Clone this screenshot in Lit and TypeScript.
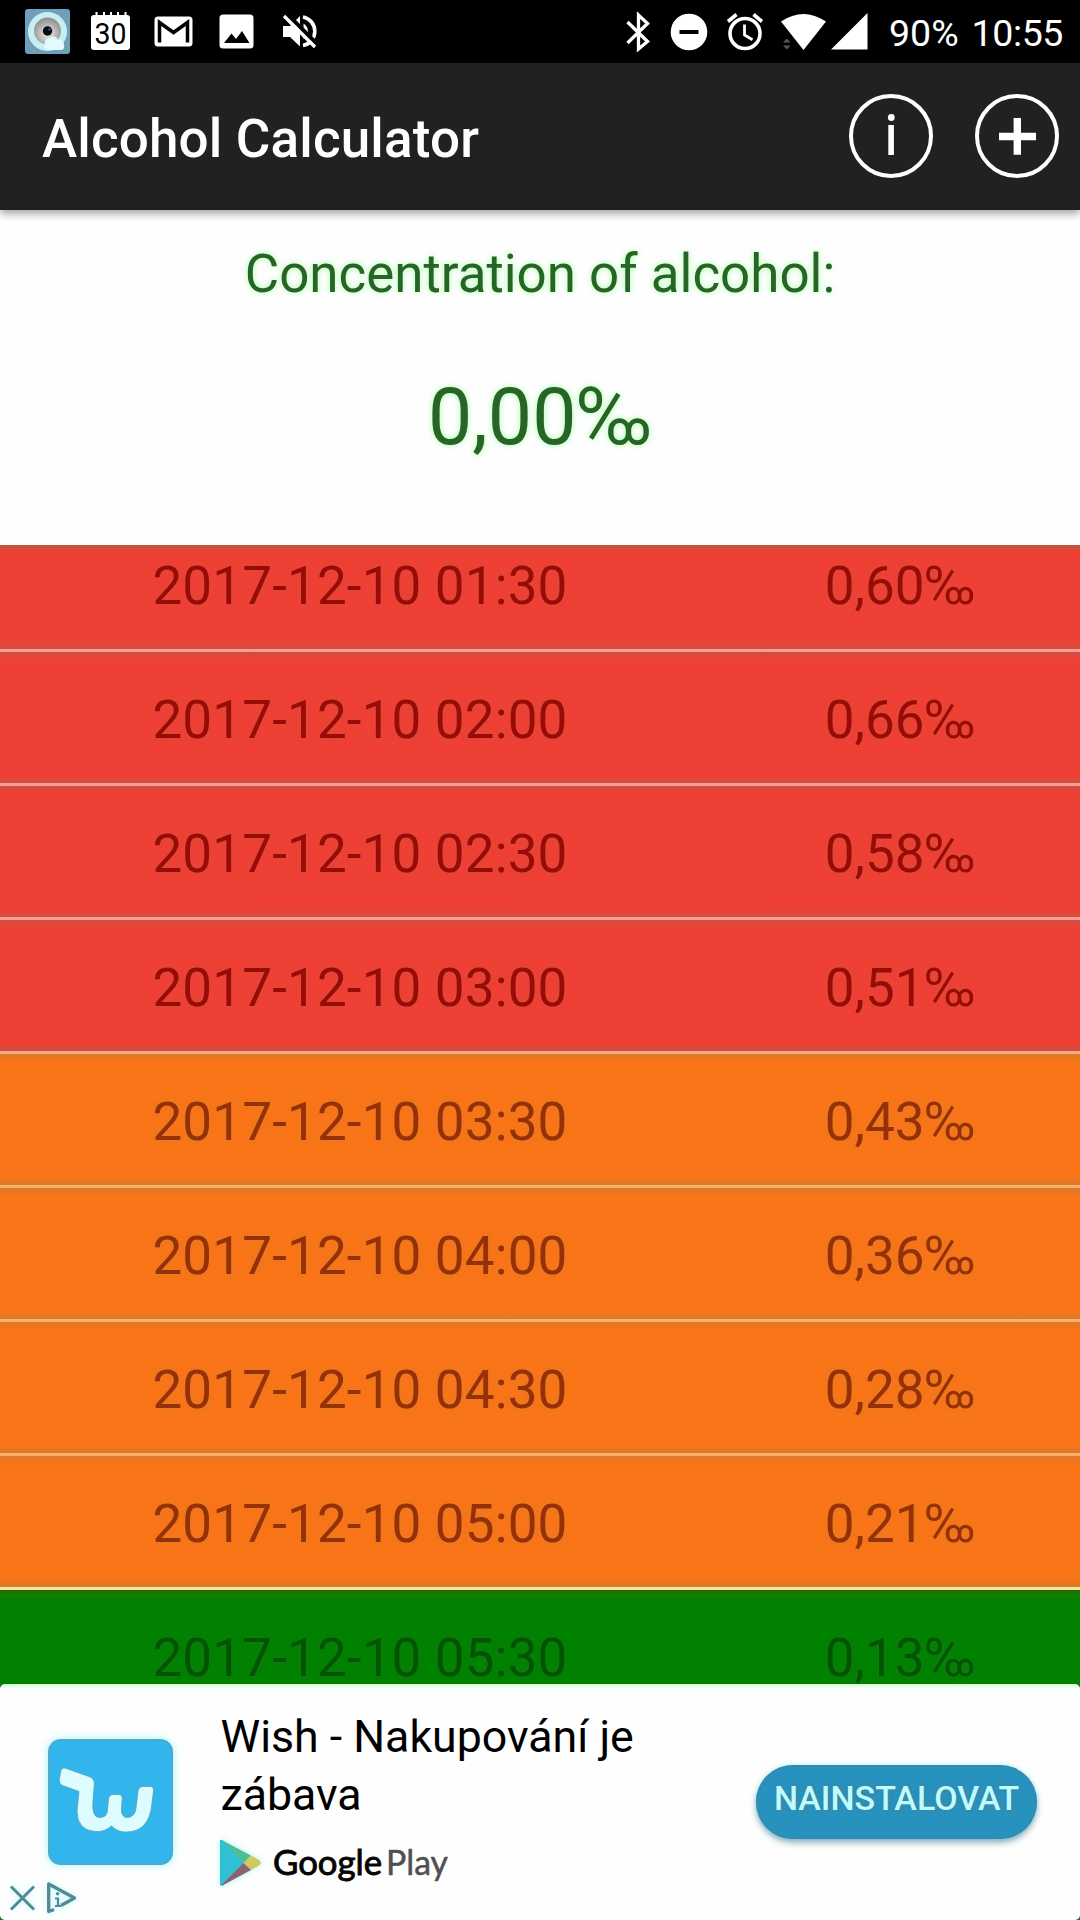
import { LitElement, html, css, svg } from "lit";
import { customElement, property } from "lit/decorators.js";
import { classMap } from "lit/directives/class-map.js";

type Level = "high" | "mid" | "low";
interface Entry { time: string; value: string; level: Level; }

const ENTRIES: Entry[] = [
  { time: "2017-12-10 01:30", value: "0,60‰", level: "high" },
  { time: "2017-12-10 02:00", value: "0,66‰", level: "high" },
  { time: "2017-12-10 02:30", value: "0,58‰", level: "high" },
  { time: "2017-12-10 03:00", value: "0,51‰", level: "high" },
  { time: "2017-12-10 03:30", value: "0,43‰", level: "mid" },
  { time: "2017-12-10 04:00", value: "0,36‰", level: "mid" },
  { time: "2017-12-10 04:30", value: "0,28‰", level: "mid" },
  { time: "2017-12-10 05:00", value: "0,21‰", level: "mid" },
  { time: "2017-12-10 05:30", value: "0,13‰", level: "low" },
];

const icon = (x: number, w: number, body: unknown) => html`
  <svg width=${w} height="63" viewBox="${x} 0 ${w} 63">${body}</svg>`;

@customElement("status-bar")
class StatusBar extends LitElement {
  static styles = css`
    :host { display: flex; height: 63px; background: #000; color: #fff; overflow: hidden;
      font-family: Roboto, sans-serif; }
    svg { display: block; flex: none; }
    .notes { display: flex; gap: 18px; padding-left: 25px; flex: 1; }
    .system { display: flex; }
    .text { box-sizing: border-box; width: 209px; display: flex; justify-content: space-between;
      padding: 2px 17px 0 18px; font-size: 37.500px; line-height: 63px; white-space: nowrap; }
    .clock { letter-spacing: -0.400px; }
    .digits { font: 400 30px Roboto, sans-serif; }
  `;
  render() {
    return html`
      <div class="notes">
        ${icon(25, 45, svg`
          <defs>
            <radialGradient id="lens" cx="0.5" cy="0.6" r="0.6">
              <stop offset="0" stop-color="#eeeeec"/><stop offset="1" stop-color="#8b8b89"/>
            </radialGradient>
          </defs>
          <rect x="25" y="9" width="45" height="45" rx="3" fill="#6f9fb9"/>
          <circle cx="47.500" cy="31.500" r="19.500" fill="#c8eef5"/>
          <circle cx="47.500" cy="31" r="13.500" fill="url(#lens)"/>
          <circle cx="47.500" cy="31" r="4.700" fill="#080c12"/>
          <circle cx="49.500" cy="29.500" r="1" fill="#6d7c88"/>
          <path d="M45 43a4 4 0 0 1 4-5 5.500 5.500 0 0 1 9 2 5 5 0 0 1 6 4q1 6-3 6H50q-8-1-5-7z" fill="#e2f9fd"/>`)}
        ${icon(88, 45, svg`
          <rect x="91" y="15" width="39" height="35" rx="3" fill="#fff"/>
          <path d="M96.500 12v5M104 12v5M111 12v5M118 12v5M125.500 12v5" stroke="#fff" stroke-width="2"/>
          <text class="digits" x="110.500" y="43.500" text-anchor="middle" textLength="32" lengthAdjust="spacingAndGlyphs" fill="#000">30</text>`)}
        ${icon(151, 45, svg`
          <rect x="154.500" y="16.500" width="38" height="30" rx="3.500" fill="#fff"/>
          <path d="M159.500 42.500V22.500L173.500 32.500L187.500 22.500V42.500" fill="none" stroke="#000" stroke-width="3.500"/>`)}
        ${icon(214, 45, svg`
          <rect x="219.500" y="14.500" width="34" height="34" rx="3.500" fill="#fff"/>
          <path d="M224 43L231.500 33.500L236 39L242 31L249.500 43Z" fill="#000"/>`)}
        ${icon(277, 45, svg`
          <path d="M283 26h7l10-10v30.500l-10-9.500h-7z" fill="#fff"/>
          <path d="M303.500 23.500a9 9 0 0 1 0 15.500z" fill="#fff"/>
          <path d="M303 17a14.500 14.500 0 0 1 0 28.500" fill="none" stroke="#fff" stroke-width="3.600"/>
          <path d="M286.500 13.500L318 45" stroke="#000" stroke-width="4"/>
          <path d="M284 16L315 47" stroke="#fff" stroke-width="3.400"/>`)}
      </div>
      <div class="system">
        ${icon(615, 48, svg`
          <path d="M627.500 22L647.500 41.500L638.500 49V15L647.500 23.500L627.500 43" fill="none" stroke="#fff" stroke-width="3.300"/>`)}
        ${icon(663, 53, svg`
          <circle cx="689" cy="32" r="18.300" fill="#fff"/>
          <rect x="679.500" y="30" width="19" height="4" fill="#000"/>`)}
        ${icon(716, 58, svg`
          <circle cx="745" cy="33.500" r="15" fill="none" stroke="#fff" stroke-width="3.600"/>
          <path d="M744.500 24.500v10.500l8 4.700" fill="none" stroke="#fff" stroke-width="2.800"/>
          <path d="M728 21.500l8.500-7M762 21.500l-8.500-7" stroke="#fff" stroke-width="3.600"/>`)}
        ${icon(774, 55, svg`
          <path d="M781 21.500Q803.500 6.500 826 21.500L803.500 50Z" fill="#fff"/>
          <path d="M783 42.500l3.800-4 3.800 4zM783 45.500l3.800 4 3.800-4z" fill="#555"/>`)}
        ${icon(829, 42, svg`<path d="M831 49.500L867.500 13V49.500Z" fill="#fff"/>`)}
        <div class="text"><span>90%</span><span class="clock">10:55</span></div>
      </div>`;
  }
}

@customElement("title-bar")
class TitleBar extends LitElement {
  static styles = css`
    :host { display: flex; align-items: center; justify-content: space-between; height: 147px;
      box-sizing: border-box; padding: 0 21px 1px 42px; background: #212121; color: #fff;
      box-shadow: 0 3px 9px rgba(0, 0, 0, 0.4); z-index: 1; font-family: Roboto, sans-serif; }
    .title { padding-top: 5px; font-size: 53px; font-weight: 500; line-height: 62px; letter-spacing: 0.150px; white-space: nowrap; }
    .actions { display: flex; gap: 42px; }
    svg { display: block; }
  `;
  render() {
    return html`
      <div class="title">Alcohol Calculator</div>
      <div class="actions">
        <svg width="84" height="84" viewBox="0 0 84 84">
          <circle cx="42" cy="42" r="40" fill="none" stroke="#fff" stroke-width="4"/>
          <circle cx="42.300" cy="23.500" r="3.400" fill="#fff"/>
          <rect x="39.300" y="31" width="5.600" height="30" fill="#fff"/>
        </svg>
        <svg width="84" height="84" viewBox="0 0 84 84">
          <circle cx="42" cy="42" r="40" fill="none" stroke="#fff" stroke-width="4"/>
          <path d="M24 42.500H61M42.300 24V60.700" stroke="#fff" stroke-width="7.400"/>
        </svg>
      </div>`;
  }
}

@customElement("history-list")
class HistoryList extends LitElement {
  @property({ attribute: false }) entries: Entry[] = [];
  static styles = css`
    :host { display: flex; flex-direction: column; overflow: hidden; font-family: Roboto, sans-serif; }
    .row { flex: none; display: grid; grid-template-columns: 2fr 1fr; align-items: center; justify-items: center;
      box-sizing: border-box; height: 134px; padding-top: 5px; font-size: 53px; line-height: 61px;
      white-space: nowrap; border-bottom: 3px solid; }
    .row:first-child { margin-top: -27px; }
    .time { letter-spacing: 0.150px; }
    .high { color: #980b07; border-color: #ff9c91; text-shadow: 0 0 5px rgba(200, 85, 60, 0.7);
      background: linear-gradient(#c95046, #e34637 4px, #ef4035 9px, #ef4035 calc(100% - 9px), #e34637 calc(100% - 4px), #c95046); }
    .row:first-child { background: linear-gradient(#ef4035 27px, #b85a45 27px, #dd4838 31px, #ef4035 36px, #ef4035 calc(100% - 9px), #e34637 calc(100% - 4px), #c95046); }
    .mid { color: #963007; border-color: #ffae68; text-shadow: 0 0 5px rgba(215, 125, 45, 0.7);
      background: linear-gradient(#d77c32, #ee751e 4px, #f97518 9px, #f97518 calc(100% - 9px), #ee7520 calc(100% - 4px), #d2802f); }
    .high.edge { border-color: #ffaa85; }
    .mid.edge { border-color: #f0e79d; }
    .low { color: #005600; border-color: #9dff9d; text-shadow: 0 0 5px rgba(30, 115, 25, 0.8);
      background: linear-gradient(#32600c, #108000 5px, #008200 9px); }
  `;
  render() {
    return this.entries.map((e, i) => {
      const next = this.entries[i + 1];
      return html`<div class=${classMap({ row: true, [e.level]: true, edge: !!next && next.level !== e.level })}>
        <span class="time">${e.time}</span><span>${e.value}</span>
      </div>`;
    });
  }
}

@customElement("ad-banner")
class AdBanner extends LitElement {
  static styles = css`
    :host { display: block; height: 236px; background: #146f1a; font-family: Roboto, sans-serif; position: relative; }
    .card { box-sizing: border-box; height: 236px; display: flex; align-items: flex-start; padding: 0 43px 0 48px;
      background: linear-gradient(#d5ffd5, #fefefe 5px); border-radius: 5px; }
    svg { display: block; flex: none; overflow: visible; }
    .logo { margin-top: 55px; filter: drop-shadow(0 0 4px #9cf6ff); }
    .copy { margin-left: 47.500px; padding-top: 24px; flex: 1; }
    .name { width: 440px; font-size: 44.700px; line-height: 58px; color: #000; }
    .store { display: flex; align-items: flex-start; margin-top: 16px; margin-left: -0.500px; }
    .tri { filter: drop-shadow(0 0 3px #a5f7f4); }
    .brand { font-family: Lato, sans-serif; font-size: 35px; }
    .cta { box-sizing: border-box; margin-top: 81px; width: 281px; height: 74px; border-radius: 37px; padding-bottom: 8px;
      display: flex; align-items: center; justify-content: center; background: #2892bf; color: #bdfbff;
      font-size: 34px; font-weight: 500; box-shadow: 0 4px 6px rgba(30, 90, 130, 0.45), 0 0 5px #b5f8ff, inset 0 0 3px #487c8c;
      text-shadow: 0 0 4px #487e8e; }
    .marks { position: absolute; left: 8px; bottom: 5px; filter: drop-shadow(0 0 3px #b5f8ff); }
  `;
  render() {
    return html`
      <div class="card">
        <svg class="logo" width="125" height="126" viewBox="0 0 125 126">
          <rect x="0.800" y="0.800" width="123.500" height="124.500" rx="12" fill="#32b5ed" stroke="#59a6bd" stroke-width="1.500"/>
          <path d="M17 29L41 37.500Q47 39.500 46.300 46L45 62Q43.500 79 52 78.500Q59 78.500 59.500 71L60.500 60Q61 55.500 65.500 55.500H70.500Q74.500 55.500 74.200 60L73.500 70Q73 78.500 79.500 78.500Q87 78 88 69L90 52Q91 47.500 95 47.500H102Q105.800 47.500 105.500 52L104 64Q101.500 92.500 79 93Q70 93.500 63.500 87Q56 93.500 47 92.500Q29 91 29 72L31 52.500L14.500 46.500Q11 45 11.300 41L12.500 33Q13.500 28.500 17 29Z" fill="#dcfcff" stroke="#579fb2" stroke-width="0.800"/>
        </svg>
        <div class="copy">
          <div class="name">Wish - Nakupování je zábava</div>
          <div class="store">
            <svg class="tri" width="41" height="46" viewBox="0 0 41 46">
              <path d="M0 0H2.500L24 23L2.500 45.500H0Z" fill="#31bfd4"/>
              <path d="M2.500 0.500L31 15.500L23.500 23L2.500 1Z" fill="#4abf96"/>
              <path d="M31 15.500L39.500 20.500Q42 22.500 39.500 25L31 30L23.500 23Z" fill="#cfca60"/>
              <path d="M31 30L2.500 45.500H1L23.500 23Z" fill="#8b6370"/>
            </svg>
            <svg class="brand" width="190" height="46" viewBox="0 0 190 46">
              <text x="12" y="35" textLength="109" lengthAdjust="spacingAndGlyphs" fill="#050505" stroke="#050505" stroke-width="0.900">Google</text>
              <text x="125" y="35" textLength="62" lengthAdjust="spacingAndGlyphs" fill="#505050" stroke="#505050" stroke-width="0.500">Play</text>
            </svg>
          </div>
        </div>
        <div class="cta">NAINSTALOVAT</div>
      </div>
      <svg class="marks" width="72" height="34" viewBox="8 1881 72 34">
        <path d="M11 1886.500L34 1909.500M34 1886.500L11 1909.500" stroke="#538994" stroke-width="3"/>
        <path d="M54 1909.500L48.700 1911.500V1884L74.500 1898L61 1905.500" fill="none" stroke="#538994" stroke-width="3.300" stroke-linejoin="round"/>
        <path d="M55 1898.500H58V1905.500M55 1906H61" fill="none" stroke="#538994" stroke-width="2.200"/>
        <circle cx="57.600" cy="1893.700" r="1.700" fill="#538994"/>
      </svg>`;
  }
}

@customElement("app-root")
class AppRoot extends LitElement {
  static styles = css`
    :host { display: flex; flex-direction: column; width: 1080px; height: 1920px; overflow: hidden;
      background: #fefefe; font-family: Roboto, sans-serif; }
    .summary { box-sizing: border-box; height: 335px; padding-top: 33px; display: flex; flex-direction: column;
      align-items: center; gap: 66px; color: #266526; text-shadow: 0 0 6px #a8ffa8; }
    .label { font-size: 52.900px; line-height: 62px; }
    .value { font-size: 78.800px; line-height: 92px; }
    .list { flex: 1; min-height: 0; }
  `;
  render() {
    return html`
      <status-bar></status-bar>
      <title-bar></title-bar>
      <div class="summary">
        <div class="label">Concentration of alcohol:</div>
        <div class="value">0,00‰</div>
      </div>
      <history-list class="list" .entries=${ENTRIES}></history-list>
      <ad-banner></ad-banner>`;
  }
}
